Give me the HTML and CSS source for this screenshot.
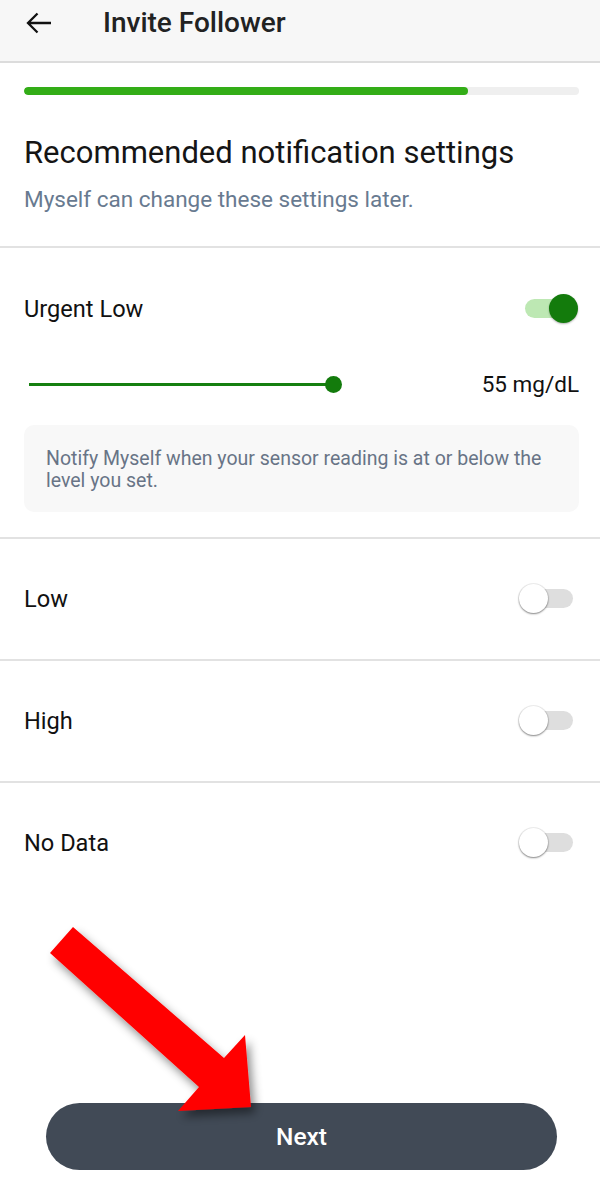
FILE: index.html
```html
<!DOCTYPE html>
<html lang="en">
<head>
<meta charset="utf-8">
<title>Invite Follower</title>
<link rel="stylesheet" href="styles.css">
</head>
<body>
<div class="page">
  <header class="appbar">
    <svg class="back" viewBox="0 0 26 22" width="26" height="22"><path d="M2 11H25M11.5 1.5L2 11L11.5 20.5" fill="none" stroke="#111" stroke-width="2.3" stroke-linecap="butt" stroke-linejoin="miter"/></svg>
    <h1 class="title">Invite Follower</h1>
  </header>

  <div class="intro">
    <div class="progress"><div class="progress-fill" style="width:80%"></div></div>
    <h2 class="heading">Recommended notification settings</h2>
    <p class="sub">Myself can change these settings later.</p>
  </div>

  <section class="alert alert-urgent">
    <div class="row">
      <span class="label">Urgent Low</span>
      <span class="toggle on"><span class="track"></span><span class="thumb"></span></span>
    </div>
    <div class="slider-row">
      <div class="slider"><span class="slider-line"></span><span class="slider-thumb"></span></div>
      <span class="value">55 mg/dL</span>
    </div>
    <div class="info">Notify Myself when your sensor reading is at or below the level you set.</div>
  </section>

  <section class="alert">
    <div class="row">
      <span class="label">Low</span>
      <span class="toggle"><span class="track"></span><span class="thumb"></span></span>
    </div>
  </section>

  <section class="alert">
    <div class="row">
      <span class="label">High</span>
      <span class="toggle"><span class="track"></span><span class="thumb"></span></span>
    </div>
  </section>

  <section class="alert last">
    <div class="row">
      <span class="label">No Data</span>
      <span class="toggle"><span class="track"></span><span class="thumb"></span></span>
    </div>
  </section>

  <div class="spacer"></div>

  <button class="next">Next</button>

  <svg class="pointer" viewBox="0 0 600 1180" width="600" height="1180">
    <defs>
      <filter id="sh" x="-20%" y="-20%" width="140%" height="140%">
        <feDropShadow dx="4" dy="6" stdDeviation="5" flood-color="#000" flood-opacity="0.45"/>
      </filter>
    </defs>
    <polygon points="73,927 50,953 199,1087 178,1111 251,1107 245,1035 224,1058" fill="#ff0000" filter="url(#sh)"/>
  </svg>
</div>
</body>
</html>
```

FILE: styles.css
```css
* { box-sizing: border-box; }
html, body { margin: 0; padding: 0; background: #fff; }
body { font-family: Roboto, "Liberation Sans", Arial, sans-serif; color: #111; }

.page {
  position: relative;
  width: 600px;
  height: 1180px;
  display: flex;
  flex-direction: column;
  overflow: hidden;
}

.appbar {
  height: 63px;
  flex: none;
  background: #f7f7f7;
  border-bottom: 2px solid #dcdcdc;
  display: flex;
  align-items: center;
  padding-left: 26px;
  padding-bottom: 16px;
}
.back { display: block; }
.title {
  margin: 0 0 0 51px;
  font-size: 28px;
  font-weight: 500;
  color: #222;
  line-height: 32px;
}

.intro {
  flex: none;
  padding: 24px 21px 33px 24px;
  border-bottom: 2px solid #e2e2e2;
}
.progress {
  height: 8px;
  background: #efefef;
  border-radius: 4px;
  overflow: hidden;
}
.progress-fill {
  height: 100%;
  background: #33ad17;
  border-radius: 4px;
}
.heading {
  margin: 40px 0 0;
  font-size: 31px;
  line-height: 36px;
  font-weight: 400;
  color: #151515;
}
.sub {
  margin: 14px 0 0;
  font-size: 22.5px;
  line-height: 28px;
  color: #687a90;
}

.alert {
  flex: none;
  padding: 0 21px 0 24px;
  border-bottom: 2px solid #e2e2e2;
}
.alert.last { border-bottom: none; }
.alert-urgent { padding-bottom: 25px; }

.row {
  height: 120px;
  display: flex;
  align-items: center;
  justify-content: space-between;
}
.alert-urgent .row { height: 122px; }
.label {
  font-size: 23.6px;
  line-height: 28px;
  color: #111;
}

.toggle {
  position: relative;
  width: 60px;
  height: 30px;
  display: block;
}
.toggle .track {
  position: absolute;
  left: 6px;
  right: 6px;
  top: 5px;
  height: 19px;
  border-radius: 10px;
  background: #dedede;
}
.toggle .thumb {
  position: absolute;
  left: 0;
  top: 0;
  width: 29px;
  height: 29px;
  border-radius: 50%;
  background: #fff;
  box-shadow: 0 1px 2px rgba(0,0,0,0.45), 0 0 0 1px rgba(0,0,0,0.06);
}
.toggle.on .track { background: #bde8b3; right: 12px; }
.toggle.on .thumb {
  left: auto;
  right: 1px;
  background: #137b0c;
  box-shadow: 0 1px 2px rgba(0,0,0,0.3);
}

.slider-row {
  height: 28px;
  display: flex;
  align-items: center;
}
.slider {
  position: relative;
  width: 318px;
  height: 28px;
}
.slider-line {
  position: absolute;
  left: 5px;
  width: 305px;
  top: 13px;
  height: 3px;
  background: #168010;
}
.slider-thumb {
  position: absolute;
  left: 301px;
  top: 6px;
  width: 17px;
  height: 17px;
  border-radius: 50%;
  background: #137b0c;
}
.value {
  margin-left: auto;
  font-size: 22.5px;
  line-height: 28px;
  color: #111;
}

.info {
  margin-top: 27px;
  background: #f8f8f8;
  border-radius: 10px;
  padding: 23px 22px 18px;
  font-size: 19.5px;
  line-height: 22px;
  color: #687486;
  height: 87px;
}

.spacer { flex: 1; }

.next {
  flex: none;
  margin: 0 43px 10px 46px;
  height: 67px;
  border: none;
  border-radius: 34px;
  background: #414a56;
  color: #fff;
  font-family: Roboto, "Liberation Sans", Arial, sans-serif;
  font-size: 24.5px;
  font-weight: 500;
}

.pointer {
  position: absolute;
  left: 0;
  top: 0;
  pointer-events: none;
}
```
